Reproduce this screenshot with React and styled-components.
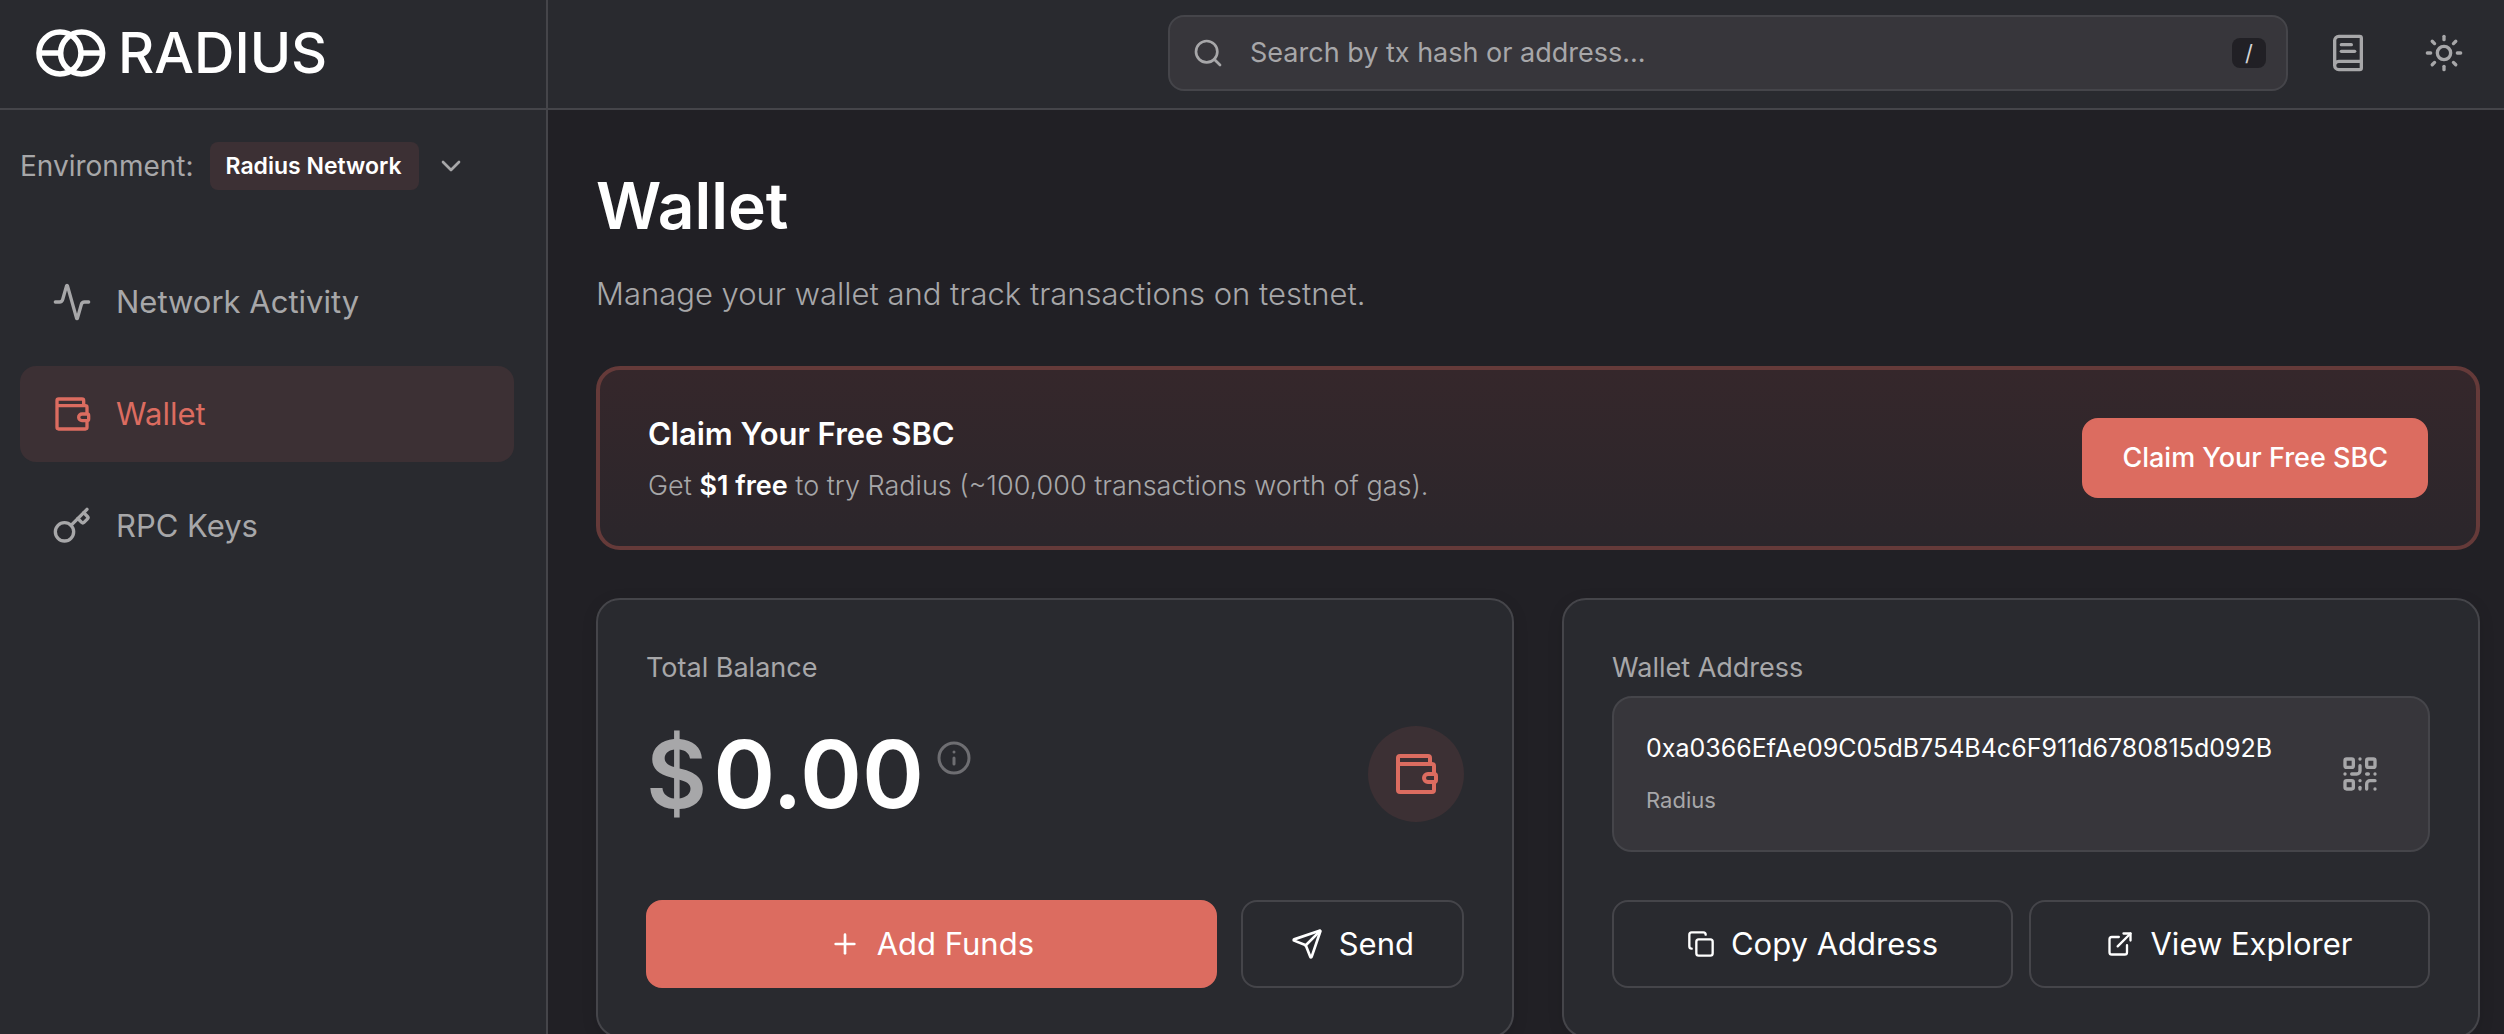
import React, { useState } from 'react';
import styled, { createGlobalStyle, css } from 'styled-components';
import {
    Activity,
    BookText,
    ChevronDown,
    Copy,
    ExternalLink,
    Info,
    Key,
    Plus,
    QrCode,
    Search,
    Send,
    Sun
} from 'lucide-react';


const GlobalStyle = createGlobalStyle`
    :root {
        --page: #212025;
        --panel: #292a2f;
        --raised: #37363b;
        --line: #45454a;
        --muted: #a7a7a9;
        --accent: #dc6c60;
        --accent-soft: #3c3034;
    }
    * {
        box-sizing: border-box;
    }
    body {
        margin: 0;
        background-color: var(--page);
        color: white;
        font-family: Inter, 'Liberation Sans', sans-serif;
        font-size: 27px;
        line-height: 40px;
    }
    button, input, select {
        font: inherit;
        color: inherit;
    }
    h1, h2, p {
        margin: 0;
    }
    svg {
        flex-shrink: 0;
    }
`;

const Layout = styled.div`
    height: 100vh;
    display: grid;
    grid-template-columns: 548px 1fr;
    grid-template-rows: 110px minmax(0, 1fr);
    grid-template-areas:
        "brand header"
        "side main"
    ;
`;
const Brand = styled.a`
    grid-area: brand;
    display: flex;
    align-items: center;
    gap: 12px;
    padding: 0 36px 2px;
    background-color: var(--panel);
    border-right: 2px solid var(--line);
    border-bottom: 2px solid var(--line);
    color: white;
    font-size: 56px;
    font-weight: 500;
    line-height: 64px;
    text-decoration: none;
`;
const Header = styled.header`
    grid-area: header;
    display: flex;
    align-items: center;
    justify-content: flex-end;
    gap: 24px;
    padding: 0 24px 2px;
    background-color: var(--panel);
    border-bottom: 2px solid var(--line);
`;
const SearchBox = styled.label`
    flex: 1;
    max-width: 1120px;
    height: 76px;
    display: flex;
    align-items: center;
    gap: 26px;
    padding: 0 20px 0 22px;
    background-color: var(--raised);
    border: 2px solid var(--line);
    border-radius: 16px;
    color: var(--muted);
    input {
        flex: 1;
        min-width: 0;
        padding: 0;
        border: none;
        outline: none;
        background: none;
    }
    input::placeholder {
        color: var(--muted);
        opacity: 1;
    }
`;
const Shortcut = styled.kbd`
    width: 34px;
    height: 30px;
    border-radius: 8px;
    background-color: var(--page);
    color: #d4d4d6;
    font-family: inherit;
    font-size: 22px;
    line-height: 30px;
    text-align: center;
`;
const IconButton = styled.button`
    width: 72px;
    height: 72px;
    display: flex;
    align-items: center;
    justify-content: center;
    padding: 0;
    border: none;
    background: none;
    color: var(--muted);
    cursor: pointer;
`;

const Sidebar = styled.aside`
    grid-area: side;
    display: flex;
    flex-direction: column;
    gap: 64px;
    padding: 32px 32px 32px 20px;
    background-color: var(--panel);
    border-right: 2px solid var(--line);
`;
const Environment = styled.div`
    display: flex;
    align-items: center;
    gap: 16px;
    color: var(--muted);
    label {
        font-size: 28px;
    }
    select {
        height: 48px;
        padding: 0 16px;
        appearance: none;
        border: none;
        border-radius: 8px;
        background-color: var(--accent-soft);
        color: white;
        font-size: 23px;
        font-weight: 600;
        cursor: pointer;
    }
`;
const Nav = styled.nav`
    display: flex;
    flex-direction: column;
    gap: 16px;
`;
const NavLink = styled.a`
    height: 96px;
    display: flex;
    align-items: center;
    gap: 24px;
    padding: 0 32px;
    border-radius: 16px;
    color: ${({ $active }) => $active ? 'var(--accent)' : 'var(--muted)'};
    background-color: ${({ $active }) => $active ? 'var(--accent-soft)' : 'transparent'};
    font-size: 31px;
    text-decoration: none;
`;

const Main = styled.main`
    grid-area: main;
    display: flex;
    flex-direction: column;
    gap: 48px;
    padding: 56px 24px 48px 48px;
    overflow-y: auto;
    scrollbar-width: none;
`;
const Heading = styled.div`
    display: flex;
    flex-direction: column;
    gap: 24px;
    h1 {
        font-size: 64px;
        font-weight: 600;
        line-height: 80px;
    }
    p {
        color: var(--muted);
        font-size: 31px;
        font-weight: 300;
        line-height: 48px;
    }
`;
const Banner = styled.section`
    display: flex;
    align-items: center;
    justify-content: space-between;
    gap: 48px;
    padding: 36px 48px;
    border: 4px solid #653a39;
    border-radius: 24px;
    background: linear-gradient(#35272b, #2b262b);
    h2 {
        font-size: 31px;
        font-weight: 600;
        line-height: 56px;
    }
    p {
        color: var(--muted);
        font-weight: 300;
        line-height: 48px;
    }
    strong {
        color: white;
        font-weight: 600;
    }
`;
const Cards = styled.div`
    display: grid;
    grid-template-columns: 1fr 1fr;
    gap: 48px;
`;
const Card = styled.section`
    padding: 48px;
    border: 2px solid var(--line);
    border-radius: 24px;
    background-color: var(--panel);
    box-shadow: 0 4px 16px rgba(0, 0, 0, 0.1);
    h2 {
        margin-bottom: 8px;
        color: var(--muted);
        font-size: 27px;
        font-weight: 400;
    }
`;
const Balance = styled.div`
    height: 156px;
    display: flex;
    align-items: center;
    justify-content: space-between;
`;
const Amount = styled.p`
    display: flex;
    align-items: flex-start;
    font-size: 94px;
    font-weight: 600;
    line-height: 92px;
    span {
        color: var(--muted);
        margin-right: 6px;
    }
    svg {
        margin: 12px 0 0 12px;
        color: #6e6e72;
    }
`;
const WalletBadge = styled.div`
    width: 96px;
    height: 96px;
    display: flex;
    align-items: center;
    justify-content: center;
    border-radius: 50%;
    background-color: var(--accent-soft);
    color: var(--accent);
`;
const AddressBox = styled.div`
    height: 156px;
    display: flex;
    align-items: center;
    justify-content: space-between;
    padding: 0 32px;
    border: 2px solid var(--line);
    border-radius: 20px;
    background-color: var(--raised);
`;
const Address = styled.p`
    font-size: 25px;
    line-height: 52px;
`;
const NetworkName = styled.p`
    color: var(--muted);
    font-size: 22px;
    line-height: 52px;
`;
const Actions = styled.div`
    display: flex;
    gap: ${({ $gap }) => $gap};
    margin-top: 48px;
`;
const Button = styled.button`
    height: 88px;
    display: flex;
    align-items: center;
    justify-content: center;
    gap: 16px;
    padding: 0 48px;
    border: 2px solid var(--line);
    border-radius: 16px;
    background-color: transparent;
    font-size: 31px;
    cursor: pointer;
    ${({ $grow }) => $grow && css`
        flex: 1;
    `}
    ${({ $primary }) => $primary && css`
        border-color: var(--accent);
        background-color: var(--accent);
    `}
`;
const ClaimButton = styled(Button)`
    height: 80px;
    padding: 0 38px;
    font-size: 27px;
    font-weight: 500;
`;

const Logo = () => (
    <svg width="70" height="48" viewBox="0 0 70 48" fill="none" stroke="currentColor" strokeWidth="5.6" aria-hidden="true">
        <circle cx="24" cy="24" r="21" />
        <circle cx="45.6" cy="24" r="21" />
        <path d="M3 24h21M46 24h21" />
    </svg>
)

const WalletIcon = ({ size }) => (
    <svg
        width={size}
        height={size}
        viewBox="0 0 24 24"
        fill="none"
        stroke="currentColor"
        strokeWidth="2"
        strokeLinejoin="round"
        aria-hidden="true"
    >
        <path d="M19 7V4a1 1 0 0 0-1-1H4a1 1 0 0 0-1 1v16a1 1 0 0 0 1 1h16a1 1 0 0 0 1-1v-4" />
        <path d="M3 7h17a1 1 0 0 1 1 1v4" />
        <path d="M18 12h3a1 1 0 0 1 1 1v2a1 1 0 0 1-1 1h-3a2 2 0 0 1 0-4z" />
    </svg>
)

const links = [
    { label: 'Network Activity', icon: Activity },
    { label: 'Wallet', icon: WalletIcon },
    { label: 'RPC Keys', icon: Key }
]

const App = () => {

    const [page, setPage] = useState('Wallet');
    const [query, setQuery] = useState('');

    const address = '0xa0366EfAe09C05dB754B4c6F911d6780815d092B';

    return (
        <>
            <GlobalStyle />
            <Layout>
                <Brand href="#"><Logo /> RADIUS</Brand>
                <Header>
                    <SearchBox>
                        <Search size={32} />
                        <input
                            type="text"
                            aria-label="Search"
                            placeholder="Search by tx hash or address..."
                            value={query}
                            onChange={(e) => setQuery(e.target.value)}
                        />
                        <Shortcut>/</Shortcut>
                    </SearchBox>
                    <IconButton aria-label="Documentation"><BookText size={40} /></IconButton>
                    <IconButton aria-label="Toggle theme"><Sun size={40} /></IconButton>
                </Header>
                <Sidebar>
                    <Environment>
                        <label htmlFor="environment">Environment:</label>
                        <select id="environment">
                            <option>Radius Network</option>
                        </select>
                        <ChevronDown size={32} />
                    </Environment>
                    <Nav>
                        {links.map(({ label, icon: Icon }) => (
                            <NavLink key={label} href="#" $active={label === page} onClick={() => setPage(label)}>
                                <Icon size={40} /> {label}
                            </NavLink>
                        ))}
                    </Nav>
                </Sidebar>
                <Main>
                    <Heading>
                        <h1>Wallet</h1>
                        <p>Manage your wallet and track transactions on testnet.</p>
                    </Heading>
                    <Banner>
                        <div>
                            <h2>Claim Your Free SBC</h2>
                            <p>Get <strong>$1 free</strong> to try Radius (~100,000 transactions worth of gas).</p>
                        </div>
                        <ClaimButton $primary>Claim Your Free SBC</ClaimButton>
                    </Banner>
                    <Cards>
                        <Card>
                            <h2>Total Balance</h2>
                            <Balance>
                                <Amount>
                                    <span>$</span>0.00
                                    <Info size={36} />
                                </Amount>
                                <WalletBadge><WalletIcon size={48} /></WalletBadge>
                            </Balance>
                            <Actions $gap="24px">
                                <Button $primary $grow><Plus size={32} /> Add Funds</Button>
                                <Button><Send size={32} /> Send</Button>
                            </Actions>
                        </Card>
                        <Card>
                            <h2>Wallet Address</h2>
                            <AddressBox>
                                <div>
                                    <Address>{address}</Address>
                                    <NetworkName>Radius</NetworkName>
                                </div>
                                <IconButton aria-label="Show QR code"><QrCode size={40} /></IconButton>
                            </AddressBox>
                            <Actions $gap="16px">
                                <Button $grow><Copy size={28} /> Copy Address</Button>
                                <Button $grow><ExternalLink size={28} /> View Explorer</Button>
                            </Actions>
                        </Card>
                    </Cards>
                </Main>
            </Layout>
        </>
    )
}

export default App
